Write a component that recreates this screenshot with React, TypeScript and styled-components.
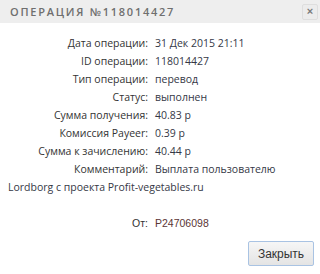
import React from 'react';
import styled, { createGlobalStyle } from 'styled-components';

const GlobalStyle = createGlobalStyle`
  body {
    margin: 0;
    background: #fff;
    font-family: 'Open Sans', 'Liberation Sans', sans-serif;
  }
`;

const Dialog = styled.div`
  width: 320px;
  height: 274px;
  display: flex;
  flex-direction: column;
  background: #fff;
  overflow: hidden;
`;

const Header = styled.div`
  height: 23px;
  display: flex;
  align-items: center;
  justify-content: space-between;
  padding: 0 2px 0 10px;
  background: #eeeeee;
`;

const Title = styled.span`
  font-size: 11px;
  letter-spacing: 1.75px;
  color: #6f6f6f;
  font-weight: 600;
  text-transform: uppercase;
`;

const CloseX = styled.button`
  width: 16px;
  height: 16px;
  padding: 0;
  display: flex;
  align-items: center;
  justify-content: center;
  background: #ececec;
  border: 1px solid #dedede;
  border-radius: 2px;
  color: #7a7a7a;
  font-size: 11px;
  font-weight: bold;
  font-family: 'Liberation Sans', sans-serif;
  line-height: 1;
`;

const Body = styled.div`
  flex: 1;
  padding: 11px 8px 0;
`;

const Row = styled.div<{ $mono?: boolean; $tone?: 'value' | 'ref' }>`
  font-size: 10.5px;
  line-height: 18px;
  color: ${(p) => (p.$tone === 'ref' ? '#5b3535' : '#353846')};
  font-family: ${(p) =>
    p.$mono ? "'Liberation Sans', Arial, sans-serif" : "'Open Sans', 'Liberation Sans', sans-serif"};
`;

const Label = styled.span`
  display: inline-block;
  width: 140px;
  margin-right: 7px;
  text-align: right;
  color: #333;
`;

const Spacer = styled.div`
  height: 18px;
`;

const Footer = styled.div`
  display: flex;
  justify-content: flex-end;
  padding: 0 6px 8px;
`;

const Button = styled.button`
  width: 66px;
  height: 25px;
  font-family: 'Liberation Sans', Arial, sans-serif;
  font-size: 12px;
  color: #333;
  background: linear-gradient(#f6f6f6, #e4e4e4);
  border: 1px solid #a9c3e3;
  border-radius: 2px;
  cursor: pointer;
`;

const rows: [string, string][] = [
  ['Дата операции:', '31 Дек 2015 21:11'],
  ['ID операции:', '118014427'],
  ['Тип операции:', 'перевод'],
  ['Статус:', 'выполнен'],
  ['Сумма получения:', '40.83 р'],
  ['Комиссия Payeer:', '0.39 р'],
  ['Сумма к зачислению:', '40.44 р'],
];

const App: React.FC = () => {
  return (
    <>
      <GlobalStyle />
      <Dialog>
        <Header>
          <Title>Операция №118014427</Title>
          <CloseX>×</CloseX>
        </Header>
        <Body>
          {rows.map(([label, value]) => (
            <Row key={label}>
              <Label>{label}</Label>
              {value}
            </Row>
          ))}
          <Row>
            <Label>Комментарий:</Label>
            <span>Выплата пользователю</span> <span>Lordborg с проекта Profit-vegetables.ru</span>
          </Row>
          <Spacer />
          <Row $mono $tone="ref">
            <Label>От:</Label>
            P24706098
          </Row>
        </Body>
        <Footer>
          <Button>Закрыть</Button>
        </Footer>
      </Dialog>
    </>
  );
};

export default App;
